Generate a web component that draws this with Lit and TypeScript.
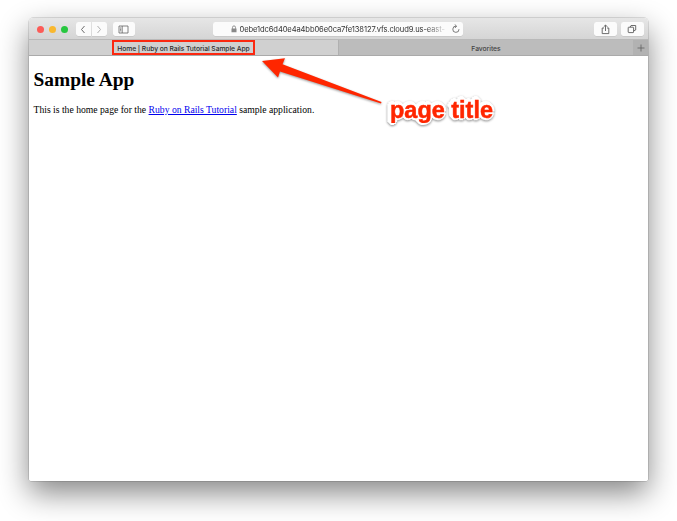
import { LitElement, html, css, svg } from "lit";
import { customElement } from "lit/decorators.js";

@customElement("browser-toolbar")
class BrowserToolbar extends LitElement {
  static styles = css`
    :host { display: block; }
    * { box-sizing: border-box; }
    .bar {
      height: 22.5px; display: flex; align-items: center; position: relative;
      background: linear-gradient(#e6e6e6, #d5d5d5); padding: 2px 4.5px 0 7.5px;
      border-bottom: 1px solid #b9b9b9;
    }
    .dot { width: 7.5px; height: 7.5px; border-radius: 50%; margin-right: 4.5px; }
    .red { background: #fc5b57; }
    .amber { background: #f9b82f; }
    .green { background: #27c73f; }
    .btn {
      height: 14px; background: #fbfbfb; border-radius: 2.5px; display: flex;
      align-items: center; justify-content: center; box-shadow: 0 0.5px 0.5px #bbb;
    }
    .btn svg { display: block; fill: none; stroke: #5c5c5c; stroke-width: 0.9; flex: none; }
    .back { width: 15px; margin-left: 3px; border-radius: 2.5px 0 0 2.5px; }
    .next { width: 15px; margin-left: 1px; border-radius: 0 2.5px 2.5px 0; }
    .btn.next svg { stroke: #a8a8a8; }
    .side { width: 22.5px; margin-left: 6px; }
    .address { width: 250px; margin-left: 78px; justify-content: flex-start; padding: 0 2px 0 18px; }
    .url {
      margin-left: 2.5px; white-space: nowrap;
      font: 7.6px/14px Inter, sans-serif; padding-top: 1px; color: #333; letter-spacing: -0.12px;
      -webkit-mask-image: linear-gradient(90deg, #000 90%, rgba(0,0,0,.15) 100%);
      mask-image: linear-gradient(90deg, #000 90%, rgba(0,0,0,.15) 100%);
    }
    .reload { margin-left: auto; }
    .spacer { flex: 1; }
    .tool { width: 22.5px; margin-left: 4.5px; }
  `;
  render() {
    return html`<div class="bar">
      <span class="dot red"></span><span class="dot amber"></span><span class="dot green"></span>
      <span class="btn back"><svg width="6" height="9"><path d="M4.5 1 1.5 4.5 4.5 8" /></svg></span>
      <span class="btn next"><svg width="6" height="9"><path d="M1.5 1 4.5 4.5 1.5 8" /></svg></span>
      <span class="btn side"><svg width="11" height="9"><path d="M1 1h9v7h-9zM4.2 1v7M2 3h1.2M2 4.4h1.2M2 5.8h1.2" stroke-width=".75" /></svg></span>
      <span class="btn address">
        <svg width="6" height="8"><path d="M1.5 3.8V2.4a1.5 1.5 0 0 1 3 0v1.4" stroke="#888" /><path d="M.5 3.5h5v3.7h-5z" fill="#888" stroke="none" /></svg>
        <span class="url">0ebe1dc6d40e4a4bb06e0ca7fe138127.vfs.cloud9.us-east-</span>
        <svg class="reload" width="10" height="10"><path d="M5.3 2.2A3.1 3.1 0 1 0 8 5.2M3.7 .4 5.6 2.2 3.9 4" stroke-width=".8" /></svg>
      </span>
      <span class="spacer"></span>
      <span class="btn tool"><svg width="9" height="11"><path d="M3 4H1.2v5.6h6.6V4H6M4.5 7V1.2M2.7 2.8 4.5 1 6.3 2.8" /></svg></span>
      <span class="btn tool"><svg width="10" height="10"><rect x="1.2" y="3.2" width="5.4" height="5.4" rx=".6" /><path d="M3.2 3.2 4 1.5H8.7V6L6.6 6.8" /></svg></span>
    </div>`;
  }
}

@customElement("browser-tabs")
class BrowserTabs extends LitElement {
  static styles = css`
    :host { display: block; }
    * { box-sizing: border-box; }
    .tabs { display: flex; height: 15.5px; font: 500 6.75px/17px Inter, sans-serif; text-align: center; border-bottom: 1px solid #aaa; }
    .tab { background: #bcbcbc; color: #444; width: 295px; border-left: 1px solid #b0b0b0; letter-spacing: -0.04px; }
    .active { background: #d0d0d0; color: #2b2b2b; width: 309px; border: 0; }
    .mark { display: inline-block; height: 15px; width: 143px; line-height: 13px; border: 2px solid #fb2810; white-space: nowrap; vertical-align: top; letter-spacing: -0.07px; }
    .add { flex: 1; background: #b2b2b2; display: flex; align-items: center; justify-content: center; padding-top: 1px; }
    .add svg { stroke: #606060; stroke-width: 0.8; }
  `;
  render() {
    return html`<div class="tabs">
      <div class="tab active"><span class="mark">Home | Ruby on Rails Tutorial Sample App</span></div>
      <div class="tab">Favorites</div>
      <div class="add"><svg width="8" height="8"><path d="M4 .5v7M.5 4h7" /></svg></div>
    </div>`;
  }
}

@customElement("app-root")
class AppRoot extends LitElement {
  static styles = css`
    :host { display: block; height: 521px; padding: 17.5px 29px 0; box-sizing: border-box; background: #fff; position: relative; overflow: hidden; }
    .window {
      height: 463.5px; background: #fff; border-radius: 4px 4px 2.5px 2.5px; overflow: hidden;
    }
    .frame { border-radius: 4px 4px 2.5px 2.5px; box-shadow: 0 0 0 0.5px rgba(0,0,0,.22), 0 12px 30px rgba(0,0,0,.48); }
    .page { padding: 12.5px 4.5px; font-family: "Liberation Serif", serif; color: #000; }
    h1 { margin: 0; font-size: 19.4px; line-height: 24px; }
    p { margin: 11px 0 0; font-size: 9.67px; line-height: 13px; }
    a { color: #0000ee; text-decoration: underline; }
    .note { position: absolute; left: 0; top: 0; }
    .arrow { fill: #ff2600; filter: drop-shadow(0 1px 1px rgba(0,0,0,.4)); }
    .label {
      font: bold 24px "Liberation Sans", sans-serif; fill: #ff2600; stroke: #ff2600; stroke-width: 0.5px;
      filter: drop-shadow(1.1px 1.1px 0 #fff) drop-shadow(-1.1px -1.1px 0 #fff) drop-shadow(1.1px -1.1px 0 #fff) drop-shadow(-1.1px 1.1px 0 #fff) drop-shadow(0 1px 1px rgba(0,0,0,.45));
    }
  `;
  render() {
    return html`
      <div class="frame"><div class="window">
        <browser-toolbar></browser-toolbar>
        <browser-tabs></browser-tabs>
        <div class="page">
          <h1>Sample App</h1>
          <p>This is the home page for the <a>Ruby on Rails Tutorial</a> sample application.</p>
        </div>
      </div></div>
      <svg class="note" width="677" height="150">
        ${svg`<path class="arrow" d="M262 61 285 58.3 282.5 64.2 381.5 102 381 103.5 280 71.5 278 77.5Z" />
        <text class="label" x="390" y="117.5" textLength="103" lengthAdjust="spacingAndGlyphs">page title</text>`}
      </svg>`;
  }
}
